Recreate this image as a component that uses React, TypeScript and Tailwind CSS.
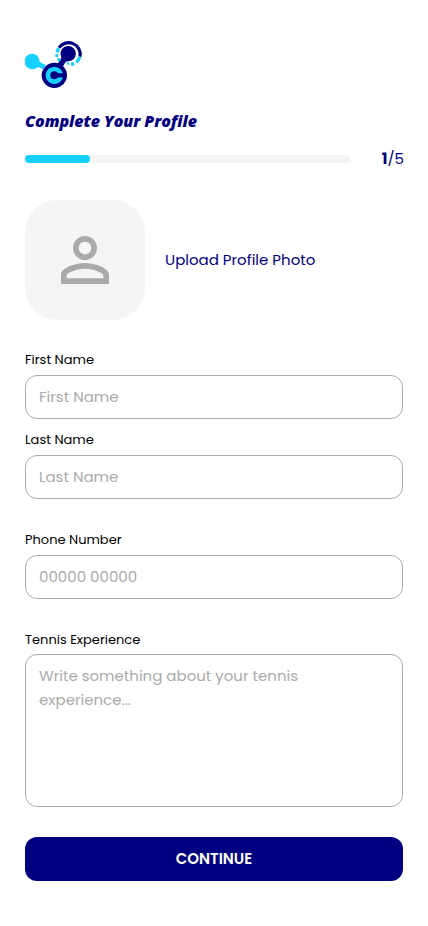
import type { ReactNode } from "react";

function Logo() {
  return (
    <svg className="block h-12 w-[58px]" viewBox="30 30 174 144" fill="none">
      {/* left ball and its arm */}
      <path
        d="M51 71.5a23 23 0 1 0 14 41.5c5-3 9-2 20 5l7-14c-12-5-18-5-19-14A23 23 0 0 0 51 71.5Z"
        fill="#16D1FF"
      />
      {/* right ball and its arm */}
      <path
        d="M160 48a23 23 0 0 0-22 31c3 9-3 12-13 26l16 10c8-14 10-21 18-21a23 23 0 1 0 1-46Z"
        fill="#000080"
      />
      <circle cx="118" cy="136" r="38" fill="#000080" />
      <circle cx="118" cy="136" r="19" stroke="#16D1FF" strokeWidth="14" />
      <path d="M122 136h24" stroke="#000080" strokeWidth="12" />
      {/* orbit */}
      <path d="M132 53A35 35 0 0 1 195 80" stroke="#000080" strokeWidth="9.5" />
      <path d="M194.500 81A35 35 0 0 1 184 97" stroke="#16D1FF" strokeWidth="10" />
      <path d="M131 54a35 35 0 0 0-4 13" stroke="#16D1FF" strokeWidth="10" />
      <rect x="121" y="72" width="9" height="9" rx="2" fill="#16D1FF" />
      <rect x="127" y="84" width="9" height="9" rx="2" fill="#16D1FF" />
      <rect x="168" y="97" width="10" height="10" rx="2" fill="#16D1FF" />
      <rect x="156" y="97" width="7" height="7" rx="2" fill="#16D1FF" />
    </svg>
  );
}

function PersonIcon() {
  return (
    <svg className="size-[72px]" viewBox="0 0 24 24" fill="#AAAAAA">
      <path d="M12 5.900c1.160 0 2.100.94 2.100 2.100s-.94 2.100-2.100 2.100S9.900 9.160 9.900 8s.94-2.100 2.100-2.100m0 9c2.970 0 6.100 1.460 6.100 2.100v1.100H5.900V17c0-.64 3.130-2.100 6.100-2.100M12 4C9.790 4 8 5.790 8 8s1.790 4 4 4 4-1.790 4-4-1.790-4-4-4zm0 9c-2.670 0-8 1.340-8 4v3h16v-3c0-2.660-5.330-4-8-4z" />
    </svg>
  );
}

function Field({ label, className, children }: { label: string; className?: string; children: ReactNode }) {
  return (
    <label className={`flex flex-col ${className ?? ""}`}>
      <span className="h-5 pt-px text-[13px] leading-5 text-black">{label}</span>
      {children}
    </label>
  );
}

const inputStyle =
  "mt-1.5 h-11 w-full rounded-xl border border-[#AAAAAA] px-[13px] pb-0.5 text-[15px] outline-none placeholder:text-[#AAAAAA]";

export default function App() {
  return (
    <main className="flex min-h-[926px] w-full flex-col bg-white px-[25px] pt-10 font-['Poppins','Inter',sans-serif]">
      <Logo />
      <h1 className="mt-[21px] font-['Open_Sans',sans-serif] text-base leading-6 font-extrabold tracking-[-0.05px] text-[#000080] italic">
        Complete Your Profile
      </h1>

      <div className="mt-3.5 flex h-6 items-center justify-between">
        <div className="h-2 w-[325px] rounded-full bg-[#F4F4F4]">
          <div className="h-2 w-1/5 rounded-full bg-[#16D1FF]" />
        </div>
        <p className="-mr-px text-[15px] leading-6 text-[#000080]">
          <b>1</b>/5
        </p>
      </div>

      <div className="mt-[29px] flex items-center gap-5">
        <div className="flex size-[120px] items-center justify-center rounded-[32px] bg-[#F5F5F5]">
          <PersonIcon />
        </div>
        <span className="text-[15px] text-[#000080]">Upload Profile Photo</span>
      </div>

      <form className="mt-[29px] flex flex-col">
        <Field label="First Name">
          <input className={inputStyle} placeholder="First Name" />
        </Field>
        <Field label="Last Name" className="mt-2.5">
          <input className={inputStyle} placeholder="Last Name" />
        </Field>
        <Field label="Phone Number" className="mt-[30px]">
          <input className={inputStyle} placeholder="00000 00000" />
        </Field>
        <Field label="Tennis Experience" className="mt-[30px]">
          <textarea
            className="mt-[5px] h-[153px] w-full resize-none rounded-xl border border-[#AAAAAA] px-[13px] py-[9px] text-[15px] leading-6 outline-none placeholder:text-[#AAAAAA]"
            placeholder="Write something about your tennis experience..."
          />
        </Field>
        <button type="button" className="mt-[30px] h-11 rounded-xl bg-[#000080] text-[15px] font-semibold text-white">
          CONTINUE
        </button>
      </form>
    </main>
  );
}
